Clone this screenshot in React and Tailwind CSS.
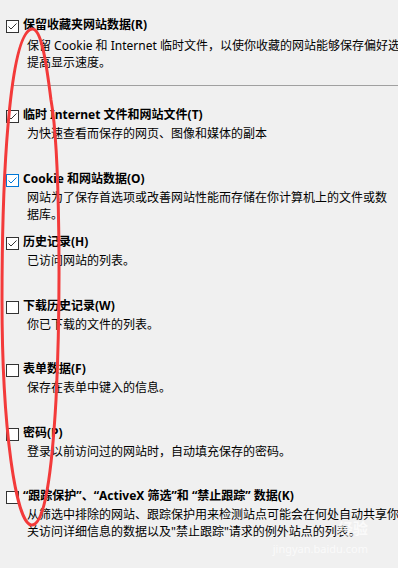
import React from "react";

const items = [
  {
    title: "临时 Internet 文件和网站文件(T)",
    desc: ["为快速查看而保存的网页、图像和媒体的副本"],
    checked: true,
  },
  {
    title: "Cookie 和网站数据(O)",
    desc: ["网站为了保存首选项或改善网站性能而存储在你计算机上的文件或数", "据库。"],
    checked: true,
    focus: true,
  },
  { title: "历史记录(H)", desc: ["已访问网站的列表。"], checked: true },
  { title: "下载历史记录(W)", desc: ["你已下载的文件的列表。"], checked: false },
  { title: "表单数据(F)", desc: ["保存在表单中键入的信息。"], checked: false },
  { title: "密码(P)", desc: ["登录以前访问过的网站时，自动填充保存的密码。"], checked: false },
  {
    title: "“跟踪保护”、“ActiveX 筛选”和 “禁止跟踪” 数据(K)",
    desc: [
      "从筛选中排除的网站、跟踪保护用来检测站点可能会在何处自动共享你有",
      "关访问详细信息的数据以及\"禁止跟踪\"请求的例外站点的列表。",
    ],
    checked: false,
  },
];

function CheckBox({ checked, focus }) {
  const color = focus ? "#0078d7" : "#333333";
  return (
    <div
      className={
        "w-[13px] h-[13px] shrink-0 bg-white border " +
        (focus ? "border-[#0078d7]" : "border-[#333333]")
      }
    >
      {checked && (
        <svg width="11" height="11" viewBox="0 0 11 11">
          <path d="M1.5 5.5 L4 8 L9.5 2.5" fill="none" stroke={color} strokeWidth="1" />
        </svg>
      )}
    </div>
  );
}

function Option({ title, desc, checked, focus, gap = "mt-0" }) {
  return (
    <div className="flex flex-col">
      <div className="flex items-center h-[18px]">
        <div className="w-[23px] pl-[6px] flex items-center pt-[3px]">
          <CheckBox checked={checked} focus={focus} />
        </div>
        <span className="font-bold text-[12px] leading-[18px] whitespace-nowrap">{title}</span>
      </div>
      <div className={"pl-[27px] " + gap}>
        {desc.map((d, i) => (
          <div key={i} className="text-[12px] leading-[17px] whitespace-nowrap">
            {d}
          </div>
        ))}
      </div>
    </div>
  );
}

export default function App() {
  return (
    <div
      className="relative w-[398px] h-[568px] overflow-hidden bg-[#f0f0f0] text-black"
      style={{ fontFamily: '"Noto Sans", "Noto Sans CJK SC", sans-serif' }}
    >
      <div className="pt-[16px]">
        <Option
          title="保留收藏夹网站数据(R)"
          checked={true}
          gap="mt-[3px]"
          desc={[
            "保留 Cookie 和 Internet 临时文件，以使你收藏的网站能够保存偏好选项并",
            "提高显示速度。",
          ]}
        />
        <div className="mt-[14px] ml-[12px] h-px bg-[#a0a0a0]" />
        <div className="pt-[20px]">
          {items.map((it, i) => (
            <div key={i} className="h-[63.5px]">
              <Option {...it} gap="mt-px" />
            </div>
          ))}
        </div>
      </div>

      {/* watermark */}
      <div className="absolute right-[30px] bottom-[12px] flex flex-col items-end text-white/70 pointer-events-none">
        <span className="text-[15px] leading-[16px] font-bold">经验</span>
        <span className="text-[11px] leading-[14px] mt-[6px]">jingyan.baidu.com</span>
      </div>

      {/* red annotation ellipse */}
      <svg className="absolute inset-0 pointer-events-none" width="398" height="568" viewBox="0 0 398 568">
        <path
          d="M32 29 C12 32 2 150 2 300 C2 430 16 522 31 525 C45 527 52 470 56 400 C61 300 60 150 51 100 C46 60 41 28 32 29 Z"
          fill="none"
          stroke="#f33a3a"
          strokeWidth="3"
        />
      </svg>
    </div>
  );
}
